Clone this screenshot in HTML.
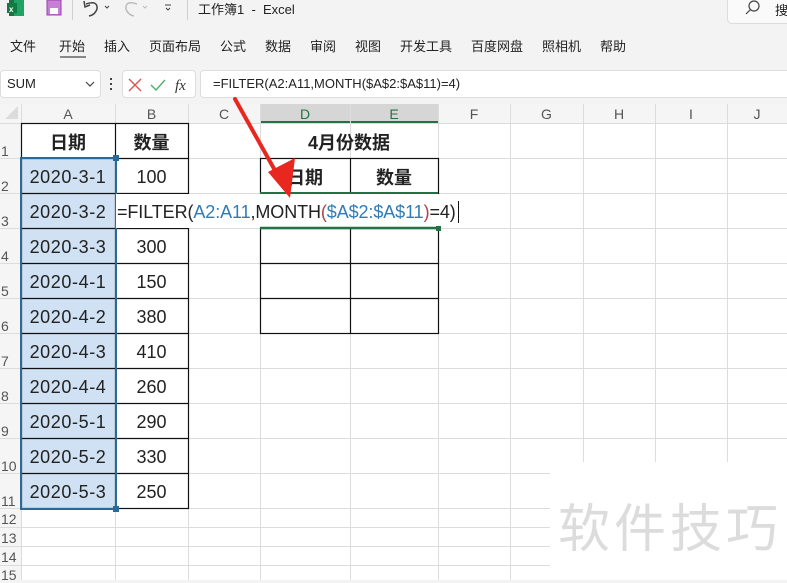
<!DOCTYPE html>
<html><head><meta charset="utf-8"><style>
*{margin:0;padding:0;box-sizing:border-box}
body{width:787px;height:580px;overflow:hidden;background:#f3f3f3;font-family:"Liberation Sans","Noto Sans CJK SC",sans-serif;position:relative;color:#222}
.a{position:absolute}
.menu span{position:absolute;top:36px;font-size:13px;color:#222}
.c{position:absolute;display:flex;align-items:center;justify-content:center;font-size:18px;color:#222;padding-top:2px}
.rn{position:absolute;left:0;width:20px;font-size:14px;color:#555;padding-left:1px}
.ch{position:absolute;top:105px;height:18px;font-size:14px;color:#555;text-align:center;line-height:18px}
</style></head><body>
<svg class="a" style="left:0;top:0" width="200" height="28">
<rect x="9" y="0" width="15" height="16" fill="#1e7145"/><rect x="14" y="0" width="10" height="16" fill="#21a366"/>
<rect x="7" y="3" width="10" height="10" fill="#107c41"/><text x="9" y="12" font-size="8" fill="#fff" font-family="Liberation Sans" font-weight="bold">x</text>
<rect x="47" y="0" width="14" height="15" fill="#c77fd6" stroke="#9b3fb0" stroke-width="1"/><rect x="50" y="8" width="8" height="6" fill="#fff"/>
<line x1="72.5" y1="0" x2="72.5" y2="20" stroke="#d0d0d0"/>
<path d="M86 4 Q98 0 97 9 Q95 15 89 16" fill="none" stroke="#444" stroke-width="1.5"/><path d="M84 1 L85 7 L90 5" fill="none" stroke="#444" stroke-width="1.5"/>
<path d="M105 6 l2 2 l2 -2" fill="none" stroke="#444"/>
<path d="M137 4 Q125 0 126 9 Q128 15 134 16" fill="none" stroke="#bbb" stroke-width="1.5"/>
<path d="M143 6 l2 2 l2 -2" fill="none" stroke="#bbb"/>
<path d="M165 5 h6 M166 8 l2 2 l2 -2" fill="none" stroke="#444"/>
<line x1="187.5" y1="0" x2="187.5" y2="20" stroke="#d0d0d0"/>
</svg>
<div class="a" style="left:198px;top:-1px;font-size:13px;color:#222">工作簿1 &nbsp;- &nbsp;Excel</div>
<div class="a" style="left:727px;top:-6px;width:70px;height:30px;background:#fafafa;border:1px solid #ddd;border-radius:5px"></div>
<svg class="a" style="left:745px;top:0" width="16" height="16"><circle cx="9" cy="6" r="5" fill="none" stroke="#444" stroke-width="1.2"/><line x1="5" y1="10" x2="1" y2="14" stroke="#444" stroke-width="1.2"/></svg>
<div class="a" style="left:775px;top:0;font-size:13px">搜</div>
<div class="menu">
<span style="left:10px">文件</span><span style="left:59px">开始</span><span style="left:104px">插入</span><span style="left:149px">页面布局</span><span style="left:220px">公式</span><span style="left:265px">数据</span><span style="left:310px">审阅</span><span style="left:355px">视图</span><span style="left:400px">开发工具</span><span style="left:471px">百度网盘</span><span style="left:542px">照相机</span><span style="left:600px">帮助</span>
</div>
<div class="a" style="left:60px;top:56px;width:26px;height:2px;background:#888"></div>
<div class="a" style="left:0;top:70px;width:101px;height:28px;background:#fff;border:1px solid #ddd;border-radius:4px;font-size:13px;line-height:26px;padding-left:6px">SUM</div>
<svg class="a" style="left:84px;top:79px" width="12" height="10"><path d="M2 3 l4 4 l4 -4" fill="none" stroke="#444" stroke-width="1.2"/></svg>
<div class="a" style="left:110px;top:78px;width:2px;height:12px;background:repeating-linear-gradient(#444 0 2px,transparent 2px 5px)"></div>
<div class="a" style="left:122px;top:70px;width:74px;height:28px;background:#fff;border:1px solid #ddd;border-radius:4px"></div>
<svg class="a" style="left:126px;top:76px" width="66" height="18"><path d="M3 3 L15 15 M15 3 L3 15" stroke="#d9534f" stroke-width="1.4"/><path d="M25 9 L30 14 L39 4" fill="none" stroke="#4caf6a" stroke-width="1.4"/><text x="49" y="14" font-size="15" font-style="italic" font-family="Liberation Serif" fill="#333">fx</text></svg>
<div class="a" style="left:200px;top:70px;width:600px;height:28px;background:#fff;border:1px solid #ddd;border-radius:4px;font-size:13px;line-height:26px;padding-left:12px">=FILTER(A2:A11,MONTH($A$2:$A$11)=4)</div>
<div class="a" style="left:0;top:104px;width:787px;height:476px;background:#fff"></div>
<div class="a" style="left:0;top:104px;width:787px;height:19px;background:#f5f5f5"></div>
<div class="a" style="left:0;top:104px;width:21px;height:476px;background:#f5f5f5"></div>
<div class="a" style="left:260px;top:104px;width:178px;height:19px;background:#d6d6d6;border-bottom:2px solid #217346"></div>
<svg class="a" style="left:0;top:0" width="787" height="580">
<path d="M5 119 L18 106 L18 119 Z" fill="#dcdcdc"/>
<g stroke="#dcdcdc" stroke-width="1">
<line x1="21.5" y1="104" x2="21.5" y2="580"/><line x1="115.5" y1="104" x2="115.5" y2="580"/><line x1="188.5" y1="104" x2="188.5" y2="580"/><line x1="260.5" y1="104" x2="260.5" y2="580"/><line x1="350.5" y1="104" x2="350.5" y2="580"/><line x1="438.5" y1="104" x2="438.5" y2="580"/><line x1="510.5" y1="104" x2="510.5" y2="580"/><line x1="583.5" y1="104" x2="583.5" y2="580"/><line x1="655.5" y1="104" x2="655.5" y2="580"/><line x1="727.5" y1="104" x2="727.5" y2="580"/>
<line x1="0" y1="123.5" x2="787" y2="123.5"/><line x1="0" y1="158.5" x2="787" y2="158.5"/><line x1="0" y1="193.5" x2="787" y2="193.5"/><line x1="0" y1="228.5" x2="787" y2="228.5"/><line x1="0" y1="263.5" x2="787" y2="263.5"/><line x1="0" y1="298.5" x2="787" y2="298.5"/><line x1="0" y1="333.5" x2="787" y2="333.5"/><line x1="0" y1="368.5" x2="787" y2="368.5"/><line x1="0" y1="403.5" x2="787" y2="403.5"/><line x1="0" y1="438.5" x2="787" y2="438.5"/><line x1="0" y1="473.5" x2="787" y2="473.5"/><line x1="0" y1="508.5" x2="787" y2="508.5"/><line x1="0" y1="527.5" x2="787" y2="527.5"/><line x1="0" y1="546.5" x2="787" y2="546.5"/><line x1="0" y1="565.5" x2="787" y2="565.5"/>
</g>
<rect x="550" y="462" width="237" height="118" fill="#fff"/>
<rect x="22" y="158" width="93" height="350" fill="#cfe1f2"/>
<g stroke="#111" stroke-width="1.2" fill="none">
<rect x="21.5" y="123.5" width="167" height="385"/>
<line x1="115.5" y1="123" x2="115.5" y2="509"/>
<line x1="22" y1="158.5" x2="188" y2="158.5"/><line x1="22" y1="193.5" x2="188" y2="193.5"/><line x1="22" y1="228.5" x2="188" y2="228.5"/><line x1="22" y1="263.5" x2="188" y2="263.5"/><line x1="22" y1="298.5" x2="188" y2="298.5"/><line x1="22" y1="333.5" x2="188" y2="333.5"/><line x1="22" y1="368.5" x2="188" y2="368.5"/><line x1="22" y1="403.5" x2="188" y2="403.5"/><line x1="22" y1="438.5" x2="188" y2="438.5"/><line x1="22" y1="473.5" x2="188" y2="473.5"/>
<rect x="260.5" y="158.5" width="178" height="35"/><line x1="350.5" y1="158" x2="350.5" y2="193"/>
<rect x="260.5" y="228.5" width="178" height="105"/><line x1="350.5" y1="228" x2="350.5" y2="333"/><line x1="260" y1="263.5" x2="438" y2="263.5"/><line x1="260" y1="298.5" x2="438" y2="298.5"/>
</g>
<rect x="21" y="158" width="95" height="351" fill="none" stroke="#2a6a98" stroke-width="2"/>
<rect x="113" y="155" width="6" height="6" fill="#2a6a98"/><rect x="113" y="506" width="6" height="6" fill="#2a6a98"/>
<line x1="260" y1="193" x2="438" y2="193" stroke="#217346" stroke-width="2"/>
<rect x="116" y="194" width="344" height="34" fill="#fff"/>
<line x1="260" y1="228" x2="438" y2="228" stroke="#217346" stroke-width="2.5"/>
<rect x="436" y="226" width="5" height="5" fill="#217346"/>
<line x1="458.5" y1="201" x2="458.5" y2="223" stroke="#111"/>
</svg>
<div class="ch" style="left:21px;width:94px">A</div><div class="ch" style="left:115px;width:73px">B</div><div class="ch" style="left:188px;width:72px">C</div><div class="ch" style="left:260px;width:90px;color:#217346">D</div><div class="ch" style="left:350px;width:88px;color:#217346">E</div><div class="ch" style="left:438px;width:72px">F</div><div class="ch" style="left:510px;width:73px">G</div><div class="ch" style="left:583px;width:72px">H</div><div class="ch" style="left:655px;width:72px">I</div><div class="ch" style="left:727px;width:60px">J</div>
<div class="rn" style="top:143px">1</div><div class="rn" style="top:178px">2</div><div class="rn" style="top:213px">3</div><div class="rn" style="top:248px">4</div><div class="rn" style="top:283px">5</div><div class="rn" style="top:318px">6</div><div class="rn" style="top:353px">7</div><div class="rn" style="top:388px">8</div><div class="rn" style="top:423px">9</div><div class="rn" style="top:458px">10</div><div class="rn" style="top:493px">11</div><div class="rn" style="top:511px">12</div><div class="rn" style="top:530px">13</div><div class="rn" style="top:549px">14</div><div class="rn" style="top:567px">15</div>
<div class="c" style="left:21px;top:123px;width:94px;height:35px;font-weight:bold">日期</div>
<div class="c" style="left:115px;top:123px;width:73px;height:35px;font-weight:bold">数量</div>
<div class="c" style="left:260px;top:123px;width:178px;height:35px;font-weight:bold">4月份数据</div>
<div class="c" style="left:260px;top:158px;width:90px;height:35px;font-weight:bold">日期</div>
<div class="c" style="left:350px;top:158px;width:88px;height:35px;font-weight:bold">数量</div>
<div class="a" style="left:21px;top:160px;width:94px;font-size:18px;letter-spacing:0.6px;text-align:center;line-height:35px">2020-3-1<br>2020-3-2<br>2020-3-3<br>2020-4-1<br>2020-4-2<br>2020-4-3<br>2020-4-4<br>2020-5-1<br>2020-5-2<br>2020-5-3</div>
<div class="a" style="left:115px;top:160px;width:73px;font-size:18px;text-align:center;line-height:35px">100<br><br>300<br>150<br>380<br>410<br>260<br>290<br>330<br>250</div>
<div class="a" style="left:117px;top:195px;font-size:18px;letter-spacing:-0.1px;line-height:35px;white-space:nowrap">=FILTER(<span style="color:#2f7cb8">A2:A11</span>,MONTH<span style="color:#b0404a">(</span><span style="color:#2f7cb8">$A$2:$A$11</span><span style="color:#b0404a">)</span>=4)</div>
<svg class="a" style="left:0;top:0" width="787" height="580">
<line x1="235" y1="99" x2="282" y2="183" stroke="#e8271e" stroke-width="4" stroke-linecap="round"/>
<path d="M290 198 L268 172 L295 158 Z" fill="#e8271e"/>
</svg>
<div class="a" style="left:558px;top:487px;font-size:52px;color:#dcdcdc;letter-spacing:4px;font-family:'Noto Sans CJK SC',sans-serif">软件技巧</div>
</body></html>
